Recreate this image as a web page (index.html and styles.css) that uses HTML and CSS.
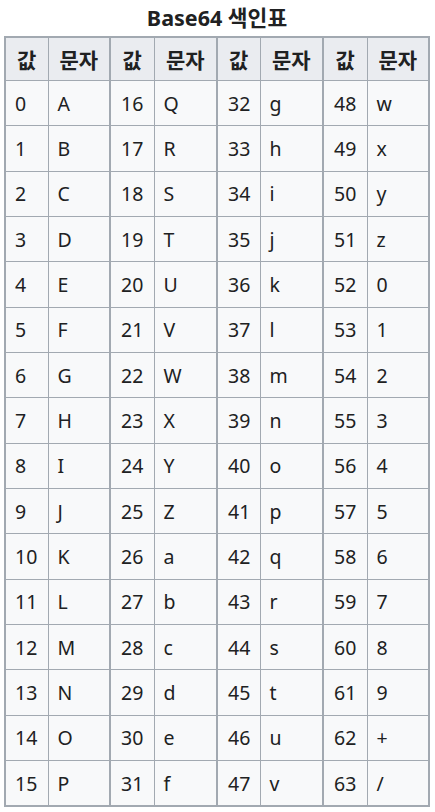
FILE: index.html
```html
<!DOCTYPE html>
<html lang="ko">
<head>
<meta charset="utf-8">
<link rel="stylesheet" href="styles.css">
</head>
<body>
<div class="page">
  <div class="title">Base64 색인표</div>
  <table class="idx">
    <colgroup>
      <col class="c1"><col class="c2"><col class="c3"><col class="c4"><col class="c5"><col class="c6"><col class="c7"><col>
    </colgroup>
    <thead>
      <tr>
        <th>값</th><th>문자</th><th class="pair">값</th><th>문자</th><th class="pair">값</th><th>문자</th><th class="pair">값</th><th>문자</th>
      </tr>
    </thead>
    <tbody>
      <tr><td>0</td><td>A</td><td class="pair num">16</td><td>Q</td><td class="pair num">32</td><td>g</td><td class="pair num">48</td><td>w</td></tr>
      <tr><td>1</td><td>B</td><td class="pair num">17</td><td>R</td><td class="pair num">33</td><td>h</td><td class="pair num">49</td><td>x</td></tr>
      <tr><td>2</td><td>C</td><td class="pair num">18</td><td>S</td><td class="pair num">34</td><td>i</td><td class="pair num">50</td><td>y</td></tr>
      <tr><td>3</td><td>D</td><td class="pair num">19</td><td>T</td><td class="pair num">35</td><td>j</td><td class="pair num">51</td><td>z</td></tr>
      <tr><td>4</td><td>E</td><td class="pair num">20</td><td>U</td><td class="pair num">36</td><td>k</td><td class="pair num">52</td><td>0</td></tr>
      <tr><td>5</td><td>F</td><td class="pair num">21</td><td>V</td><td class="pair num">37</td><td>l</td><td class="pair num">53</td><td>1</td></tr>
      <tr><td>6</td><td>G</td><td class="pair num">22</td><td>W</td><td class="pair num">38</td><td>m</td><td class="pair num">54</td><td>2</td></tr>
      <tr><td>7</td><td>H</td><td class="pair num">23</td><td>X</td><td class="pair num">39</td><td>n</td><td class="pair num">55</td><td>3</td></tr>
      <tr><td>8</td><td>I</td><td class="pair num">24</td><td>Y</td><td class="pair num">40</td><td>o</td><td class="pair num">56</td><td>4</td></tr>
      <tr><td>9</td><td>J</td><td class="pair num">25</td><td>Z</td><td class="pair num">41</td><td>p</td><td class="pair num">57</td><td>5</td></tr>
      <tr><td>10</td><td>K</td><td class="pair num">26</td><td>a</td><td class="pair num">42</td><td>q</td><td class="pair num">58</td><td>6</td></tr>
      <tr><td>11</td><td>L</td><td class="pair num">27</td><td>b</td><td class="pair num">43</td><td>r</td><td class="pair num">59</td><td>7</td></tr>
      <tr><td>12</td><td>M</td><td class="pair num">28</td><td>c</td><td class="pair num">44</td><td>s</td><td class="pair num">60</td><td>8</td></tr>
      <tr><td>13</td><td>N</td><td class="pair num">29</td><td>d</td><td class="pair num">45</td><td>t</td><td class="pair num">61</td><td>9</td></tr>
      <tr><td>14</td><td>O</td><td class="pair num">30</td><td>e</td><td class="pair num">46</td><td>u</td><td class="pair num">62</td><td>+</td></tr>
      <tr><td>15</td><td>P</td><td class="pair num">31</td><td>f</td><td class="pair num">47</td><td>v</td><td class="pair num">63</td><td>/</td></tr>
    </tbody>
  </table>
</div>
</body>
</html>
```
FILE: styles.css
```css
html, body {
  margin: 0;
  padding: 0;
  background: #ffffff;
}
body {
  font-family: "Noto Sans", "Noto Sans CJK KR", sans-serif;
  color: #202122;
}
.page {
  padding: 0 5px 0 4px;
}
.title {
  font-weight: bold;
  font-size: 21.5px;
  text-align: center;
  height: 36px;
  line-height: 36px;
}
.idx {
  border-collapse: collapse;
  border: 2px solid #a2a9b1;
  width: 426px;
  font-size: 19.5px;
  background: #f8f9fa;
  table-layout: fixed;
}
.idx th, .idx td {
  border: 1px solid #a2a9b1;
  padding: 0 0 0 9px;
  text-align: left;
}
.idx th {
  background: #eaecf0;
  font-weight: bold;
  font-size: 21px;
  text-align: center;
  padding: 0;
  height: 42px;
}
.idx td {
  height: 44.33px;
}
.idx .pair {
  border-left: 2px solid #a2a9b1;
}
.idx .num {
  padding-left: 10px;
}
.c1 { width: 43px; }
.c2 { width: 62px; }
.c3 { width: 44px; }
.c4 { width: 63px; }
.c5 { width: 43px; }
.c6 { width: 63px; }
.c7 { width: 44px; }
```
